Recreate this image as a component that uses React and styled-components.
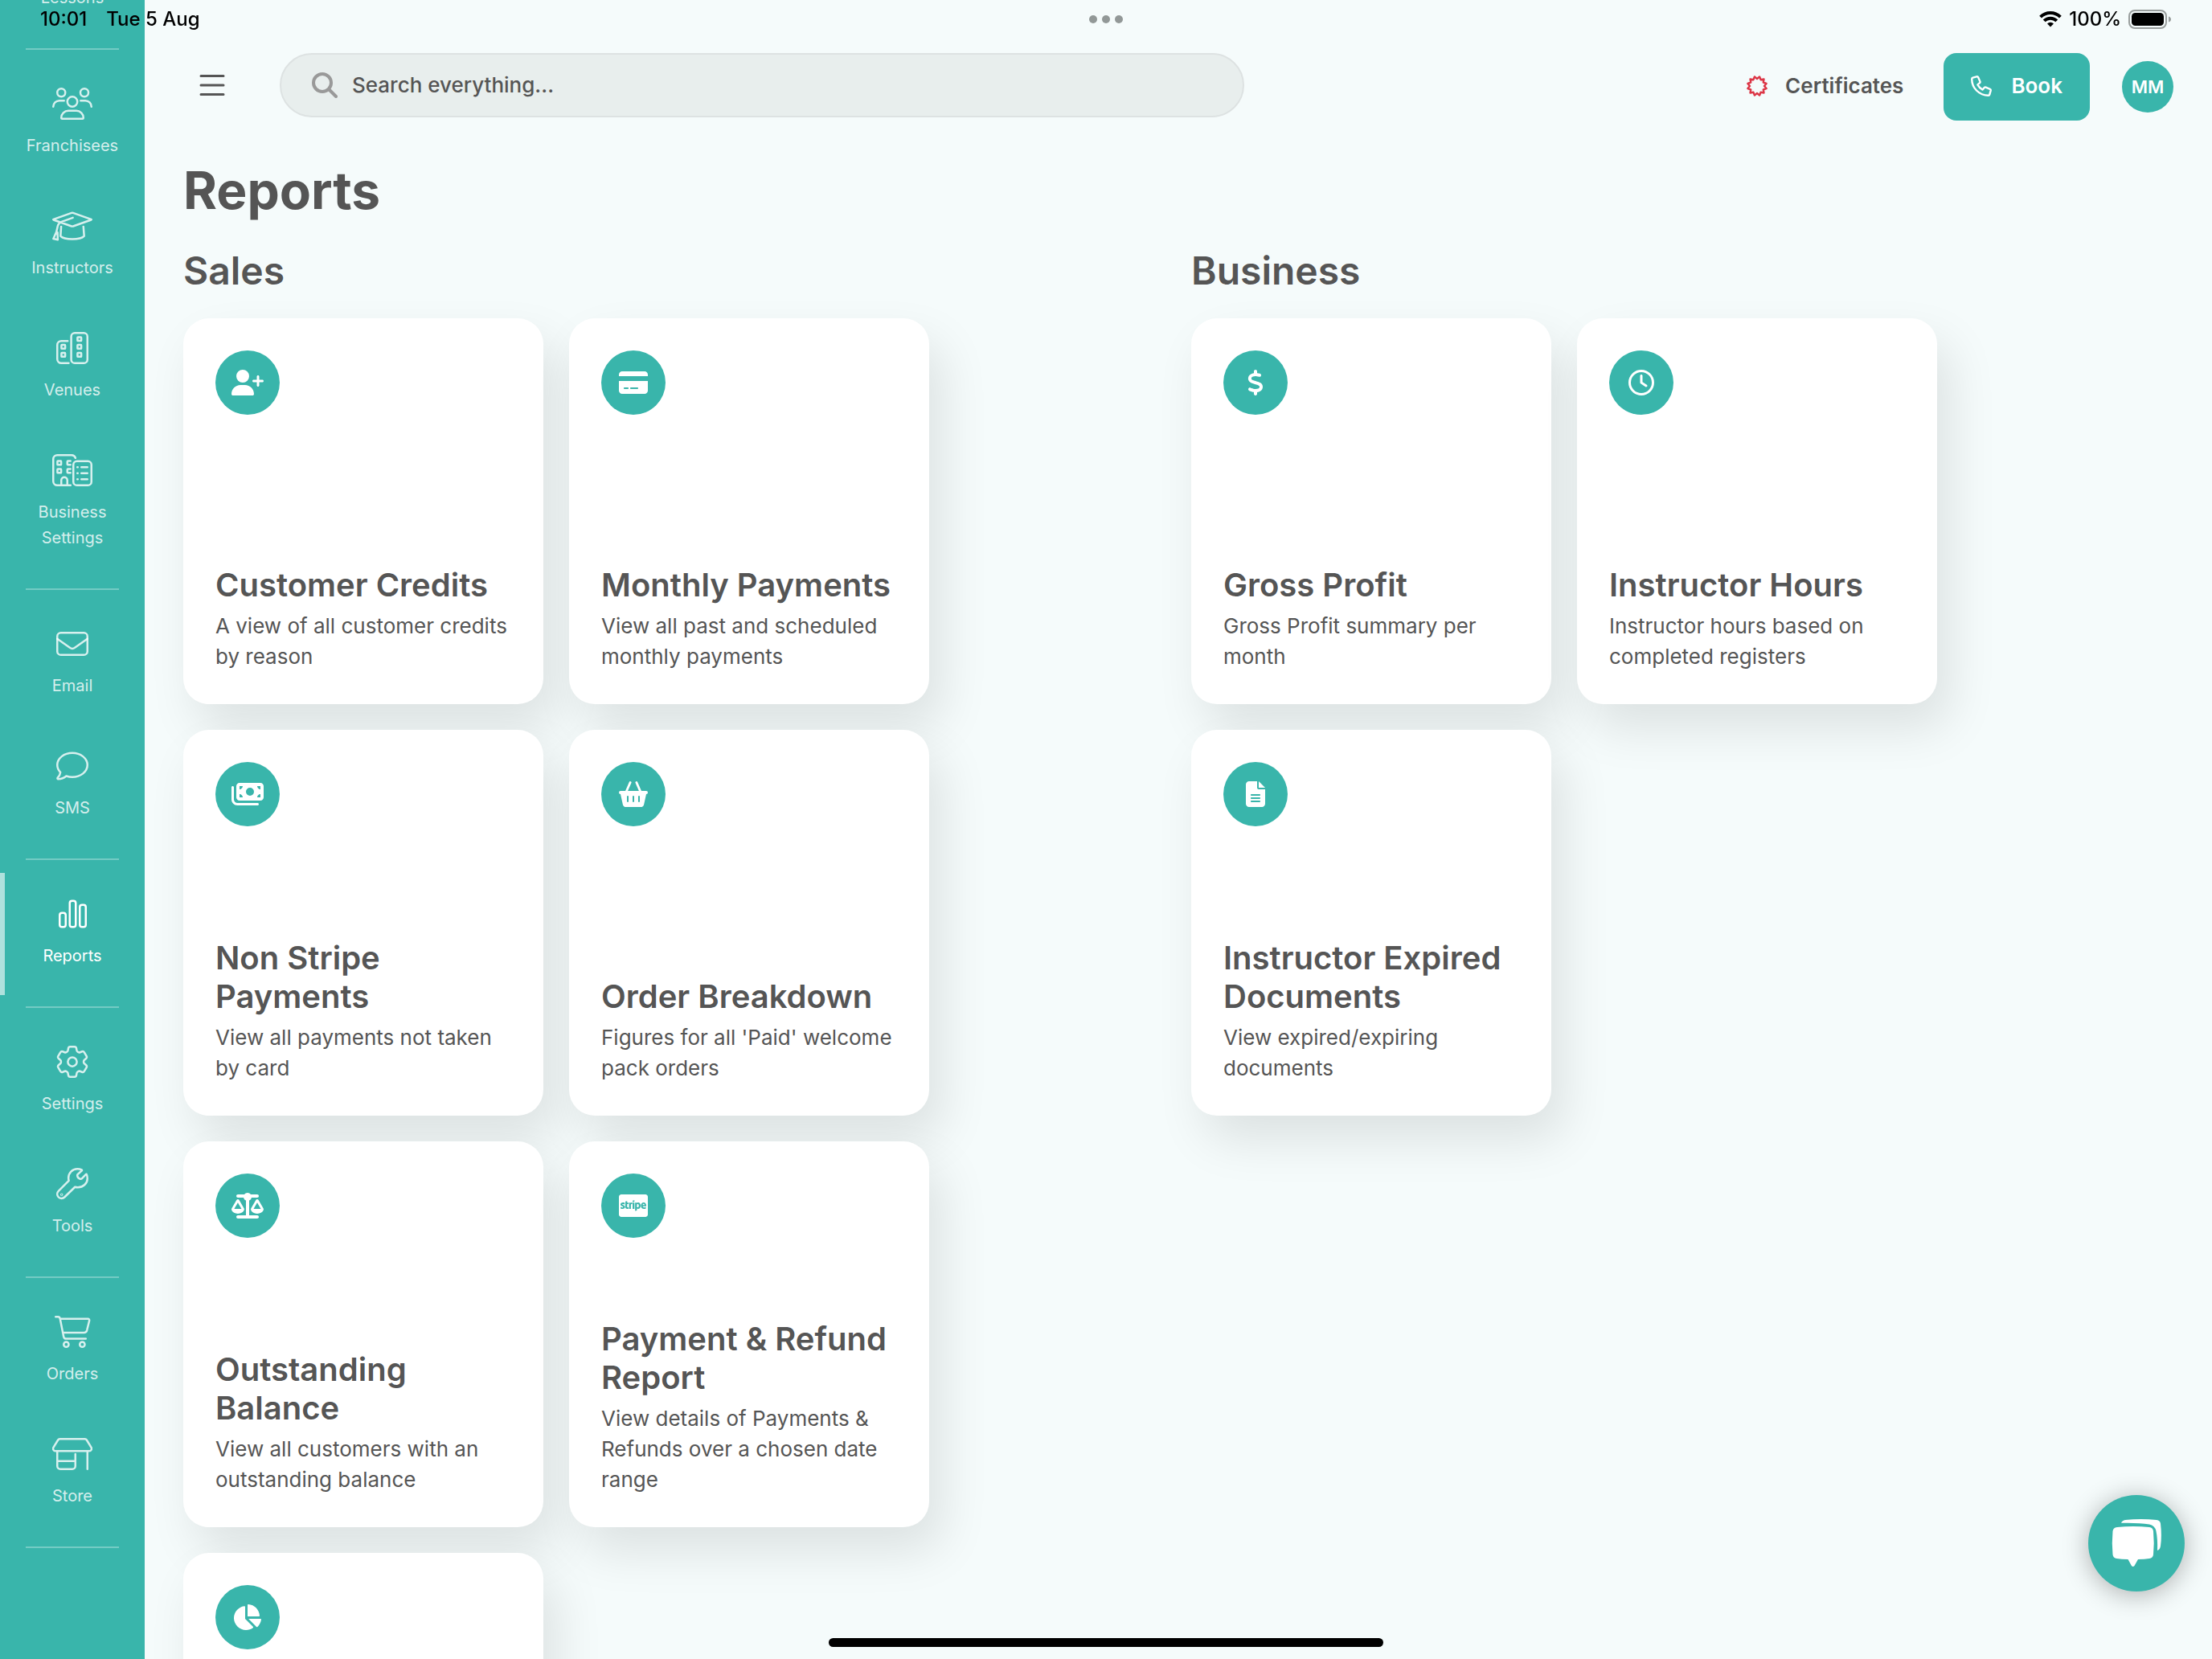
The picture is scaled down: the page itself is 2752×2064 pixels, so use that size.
import React from "react";
import styled, { createGlobalStyle, css } from "styled-components";
import {
  FaUserPlus,
  FaCreditCard,
  FaMoneyBills,
  FaScaleBalanced,
  FaCcStripe,
  FaDollarSign,
  FaRegClock,
  FaFileLines,
} from "react-icons/fa6";
import { FaChartPie } from "react-icons/fa";

const teal = "#39b5ab";
const ink = "#555555";

const GlobalStyle = createGlobalStyle`
  *, *::before, *::after { box-sizing: border-box; }
  body {
    margin: 0;
    background: #f5fbfb;
    color: ${ink};
    font-family: Inter, "Liberation Sans", sans-serif;
    font-size: 26px;
    line-height: 38px;
  }
  h1, h2, h3, p, ul { margin: 0; padding: 0; }
  button, input { font: inherit; color: inherit; }
`;

const Shell = styled.div`
  display: flex;
  height: 100vh;
  overflow: hidden;
`;

/* ---------- status bar ---------- */

const StatusBar = styled.div`
  position: fixed;
  z-index: 5;
  inset: 0 0 auto 0;
  height: 48px;
  padding: 0 50px;
  display: grid;
  grid-template-columns: 1fr auto 1fr;
  align-items: center;
  color: #000;
  font-size: 24px;
  font-weight: 500;
  line-height: 28px;
  pointer-events: none;
`;

const StatusGroup = styled.div`
  display: flex;
  align-items: center;
  gap: ${(p) => p.$gap}px;
  justify-content: ${(p) => (p.$end ? "flex-end" : "flex-start")};
`;

const Dots = styled.div`
  display: flex;
  gap: 6px;
`;

const Dot = styled.span`
  width: 10px;
  height: 10px;
  border-radius: 50%;
  background: #929897;
`;

const HomeIndicator = styled.div`
  position: fixed;
  z-index: 5;
  bottom: 15px;
  left: 50%;
  width: 690px;
  height: 11px;
  margin-left: -345px;
  border-radius: 6px;
  background: #000;
`;

/* ---------- sidebar ---------- */

const Sidebar = styled.nav`
  flex: none;
  width: 180px;
  overflow: hidden;
  background: ${teal};
`;

const NavList = styled.ul`
  list-style: none;
  margin-top: -106px;
`;

const NavDivider = styled.li`
  height: 2px;
  margin: 14px 32px 16px;
  background: rgba(255, 255, 255, 0.3);
`;

const NavLink = styled.a`
  display: flex;
  flex-direction: column;
  align-items: center;
  gap: 16px;
  padding: 31px 16px 33px;
  color: rgba(255, 255, 255, 0.8);
  font-size: 20px;
  line-height: 32px;
  text-align: center;
  text-decoration: none;
  ${(p) =>
    p.$active &&
    css`
      color: #fff;
      box-shadow: inset 6px 0 0 rgba(255, 255, 255, 0.6);
    `}
`;

const LineIcon = styled.svg`
  display: block;
  height: 40px;
  fill: none;
  stroke: currentColor;
  stroke-width: ${(p) => p.$stroke || 32};
  stroke-linecap: round;
  stroke-linejoin: round;
`;

const icons = {
  lessons: (
    <LineIcon viewBox="0 0 512 512">
      <rect x="48" y="16" width="416" height="480" rx="48" />
      <path d="M144 144h224M144 240h224" />
    </LineIcon>
  ),
  franchisees: (
    <LineIcon viewBox="0 0 640 512">
      <circle cx="144" cy="80" r="64" />
      <circle cx="512" cy="80" r="64" />
      <circle cx="320" cy="224" r="80" />
      <path d="M160 496h320c9 0 16-7 16-16 0-62-50-112-112-112H256c-62 0-112 50-112 112 0 9 7 16 16 16zM16 304c0-53 43-96 96-96h76M624 304c0-53-43-96-96-96h-76" />
    </LineIcon>
  ),
  instructors: (
    <LineIcon viewBox="0 0 640 512">
      <path d="M20 152 308 50q12-4 24 0l288 102q8 4 0 8L332 262q-12 4-24 0L20 160q-8-4 0-8zM328 126 150 190c-36 14-54 34-62 66l-22 96M66 352 18 462l70 14-4-116zM142 268l-10 150c30 34 104 50 188 50s158-16 188-50l-12-150" />
    </LineIcon>
  ),
  venues: (
    <LineIcon viewBox="0 0 512 512">
      <rect x="238" y="16" width="258" height="480" rx="56" />
      <path d="M182 144H80c-35 0-64 29-64 64v224c0 35 29 64 64 64h118" />
      <rect x="82" y="206" width="60" height="60" rx="8" />
      <rect x="82" y="334" width="60" height="60" rx="8" />
      <rect x="338" y="82" width="60" height="60" rx="8" />
      <rect x="338" y="206" width="60" height="60" rx="8" />
      <rect x="338" y="334" width="60" height="60" rx="8" />
    </LineIcon>
  ),
  business: (
    <LineIcon viewBox="0 0 640 512">
      <path d="M292 496H80c-35 0-64-29-64-64V80c0-35 29-64 64-64h228c30 0 54 18 62 46M144 496v-80a48 48 0 0 1 96 0v80M290 110h-40q-10 0-10 10v40q0 10 10 10h40M290 238h-40q-10 0-10 10v40q0 10 10 10h40" />
      <rect x="82" y="110" width="60" height="60" rx="8" />
      <rect x="82" y="238" width="60" height="60" rx="8" />
      <rect x="336" y="112" width="288" height="384" rx="56" />
      <path d="M400 208h6M400 304h6M400 400h6M464 208h96M464 304h96M464 400h96" />
    </LineIcon>
  ),
  email: (
    <LineIcon viewBox="0 0 512 512">
      <rect x="16" y="80" width="480" height="352" rx="56" />
      <path d="m16 176 200 142c24 17 56 17 80 0l200-142" />
    </LineIcon>
  ),
  sms: (
    <LineIcon viewBox="0 0 512 512">
      <path d="M160 416c30 10 62 16 96 16 132 0 240-86 240-192S388 48 256 48 16 134 16 240c0 44 19 85 50 118-3 31-20 61-44 86-7 8-2 20 9 20 44 0 92-16 129-48z" />
    </LineIcon>
  ),
  reports: (
    <LineIcon viewBox="0 0 448 512">
      <rect x="16" y="240" width="96" height="224" rx="36" />
      <rect x="176" y="48" width="96" height="416" rx="36" />
      <rect x="336" y="112" width="96" height="352" rx="36" />
    </LineIcon>
  ),
  settings: (
    <LineIcon viewBox="2.4 2.4 19.2 19.2" $stroke={1.2}>
      <path d="M9.594 3.94c.09-.542.56-.94 1.11-.94h2.593c.55 0 1.02.398 1.11.94l.213 1.281c.063.374.313.686.645.87.074.04.147.083.22.127.325.196.72.257 1.075.124l1.217-.456a1.125 1.125 0 0 1 1.37.49l1.296 2.247a1.125 1.125 0 0 1-.26 1.431l-1.003.827c-.293.241-.438.613-.43.992a7.723 7.723 0 0 1 0 .255c-.008.378.137.75.43.991l1.004.827c.424.35.534.955.26 1.43l-1.298 2.247a1.125 1.125 0 0 1-1.369.491l-1.217-.456c-.355-.133-.75-.072-1.076.124a6.47 6.47 0 0 1-.22.128c-.331.183-.581.495-.644.869l-.213 1.281c-.09.543-.56.94-1.11.94h-2.594c-.55 0-1.019-.398-1.11-.94l-.213-1.281c-.062-.374-.312-.686-.644-.87a6.52 6.52 0 0 1-.22-.127c-.325-.196-.72-.257-1.076-.124l-1.217.456a1.125 1.125 0 0 1-1.369-.49l-1.297-2.247a1.125 1.125 0 0 1 .26-1.431l1.004-.827c.292-.24.437-.613.43-.991a6.932 6.932 0 0 1 0-.255c.007-.38-.138-.751-.43-.992l-1.004-.827a1.125 1.125 0 0 1-.26-1.43l1.297-2.247a1.125 1.125 0 0 1 1.37-.491l1.216.456c.356.133.751.072 1.076-.124.072-.044.146-.086.22-.128.332-.183.582-.495.644-.869l.214-1.28Z" />
      <circle cx="12" cy="12" r="2.7" />
    </LineIcon>
  ),
  tools: (
    <LineIcon viewBox="0 0 512 512">
      <path d="M406 32c-22-10-46-16-70-16-80 0-142 66-142 144 0 15 2 30 6 44L38 366c-29 29-29 70-4 98s72 28 100 0l164-160c14 4 30 6 46 6 84 0 152-62 152-142 0-22-4-44-12-64-2-6-6-6-10-2l-64 66c-8 8-18 10-28 8-24-6-42-24-46-48-2-10 0-22 8-28l64-58c4-4 2-6-2-8z" />
      <circle cx="86" cy="424" r="6" />
    </LineIcon>
  ),
  orders: (
    <LineIcon viewBox="0 0 576 512">
      <path d="M16 16h37c16 0 29 11 32 26l58 290c4 20 20 34 40 34h313M84 48h446c16 0 26 15 22 30l-38 153c-6 22-25 37-48 37H128" />
      <circle cx="184" cy="456" r="40" />
      <circle cx="440" cy="456" r="40" />
    </LineIcon>
  ),
  store: (
    <LineIcon viewBox="0 0 640 512">
      <path d="M120 16h400c12 0 22 6 28 16l72 118c16 26 0 58-32 58H52c-32 0-48-32-32-58L92 32c6-10 16-16 28-16zM80 208v240c0 26 22 48 48 48h192c26 0 48-22 48-48V256M80 368h288M560 208v288" />
    </LineIcon>
  ),
};

const navGroups = [
  [{ label: "Lessons", icon: "lessons" }],
  [
    { label: "Franchisees", icon: "franchisees" },
    { label: "Instructors", icon: "instructors" },
    { label: "Venues", icon: "venues" },
    { label: "Business Settings", icon: "business" },
  ],
  [
    { label: "Email", icon: "email" },
    { label: "SMS", icon: "sms" },
  ],
  [{ label: "Reports", icon: "reports", active: true }],
  [
    { label: "Settings", icon: "settings" },
    { label: "Tools", icon: "tools" },
  ],
  [
    { label: "Orders", icon: "orders" },
    { label: "Store", icon: "store" },
  ],
];

/* ---------- header ---------- */

const Main = styled.main`
  flex: 1;
  min-width: 0;
  padding: 66px 48px 0;
  overflow: hidden;
`;

const Header = styled.header`
  display: flex;
  align-items: flex-start;
  gap: 48px;
  margin-bottom: 48px;
`;

const MenuButton = styled.button`
  flex: none;
  display: grid;
  place-items: center;
  width: 72px;
  height: 80px;
  padding: 0;
  border: 0;
  background: none;
`;

const SearchBox = styled.label`
  flex: 0 1 1200px;
  display: flex;
  align-items: center;
  gap: 18px;
  height: 80px;
  padding: 0 38px;
  border: 2px solid #dde2e2;
  border-radius: 40px;
  background: #e8eeed;
`;

const SearchInput = styled.input`
  flex: 1;
  min-width: 0;
  padding: 0;
  border: 0;
  outline: 0;
  background: none;
  font-size: 26px;
  font-weight: 500;
  line-height: 38px;
  &::placeholder {
    color: ${ink};
    opacity: 1;
  }
`;

const HeaderActions = styled.div`
  display: flex;
  align-items: center;
  gap: 40px;
  height: 84px;
  margin-left: auto;
  font-weight: 600;
`;

const CertificatesLink = styled.a`
  display: flex;
  align-items: center;
  gap: 22px;
  padding: 0 10px 2px 0;
  color: ${ink};
  font-size: 26px;
  text-decoration: none;
`;

const BookButton = styled.button`
  display: flex;
  align-items: center;
  gap: 24px;
  height: 84px;
  padding: 0 34px 2px;
  border: 0;
  border-radius: 16px;
  background: ${teal};
  color: #fff;
  font-size: 26px;
`;

const Avatar = styled.button`
  width: 64px;
  height: 64px;
  padding: 0;
  border: 0;
  border-radius: 50%;
  background: ${teal};
  color: #fff;
  font-size: 22px;
`;

const starPoints = Array.from({ length: 24 }, (_, i) => {
  const angle = (Math.PI / 12) * i - Math.PI / 2;
  const radius = i % 2 ? 12 : 9;
  return `${13 + radius * Math.cos(angle)},${13 + radius * Math.sin(angle)}`;
}).join(" ");

/* ---------- report cards ---------- */

const PageTitle = styled.h1`
  font-size: 64px;
  font-weight: 700;
  line-height: 78px;
`;

const Sections = styled.div`
  display: grid;
  grid-template-columns: 1fr 1fr;
  gap: 32px;
  padding-top: 32px;
`;

const SectionTitle = styled.h2`
  margin-bottom: 30px;
  font-size: 48px;
  font-weight: 600;
  line-height: 58px;
`;

const CardGrid = styled.div`
  display: flex;
  flex-wrap: wrap;
  gap: 32px;
  max-width: 960px;
`;

const Card = styled.a`
  display: flex;
  flex-direction: column;
  width: 448px;
  height: 480px;
  padding: 40px;
  border-radius: 32px;
  background: #fff;
  box-shadow: 16px 30px 60px rgba(0, 0, 0, 0.1);
  color: inherit;
  text-decoration: none;
`;

const Badge = styled.span`
  display: grid;
  place-items: center;
  width: 80px;
  height: 80px;
  margin-bottom: auto;
  border-radius: 50%;
  background: ${teal};
  color: #fff;
  svg {
    display: block;
    width: ${(p) => p.$iconWidth}px;
    height: 32px;
  }
`;

const CardTitle = styled.h3`
  margin-bottom: 8px;
  font-size: 40px;
  font-weight: 600;
  line-height: 48px;
`;

const CardText = styled.p`
  font-size: 26px;
  line-height: 38px;
`;

const BasketIcon = () => (
  <svg viewBox="0 0 576 512" fill="currentColor">
    <path
      d="M226 24 146 208M350 24l80 184"
      fill="none"
      stroke="currentColor"
      strokeWidth="46"
      strokeLinecap="round"
    />
    <path
      fillRule="evenodd"
      d="M32 192h512a32 32 0 0 1 0 64l-46 206c-6 30-32 50-62 50H140c-30 0-56-20-62-50L32 256a32 32 0 0 1 0-64zM192 304a16 16 0 0 0-32 0v96a16 16 0 0 0 32 0zM304 304a16 16 0 0 0-32 0v96a16 16 0 0 0 32 0zM416 304a16 16 0 0 0-32 0v96a16 16 0 0 0 32 0z"
    />
  </svg>
);

const sections = [
  {
    title: "Sales",
    cards: [
      { icon: FaUserPlus, width: 40, title: "Customer Credits", text: "A view of all customer credits by reason" },
      { icon: FaCreditCard, width: 36, title: "Monthly Payments", text: "View all past and scheduled monthly payments" },
      { icon: FaMoneyBills, width: 40, title: "Non Stripe Payments", text: "View all payments not taken by card" },
      { icon: BasketIcon, width: 36, title: "Order Breakdown", text: "Figures for all 'Paid' welcome pack orders" },
      { icon: FaScaleBalanced, width: 40, title: "Outstanding Balance", text: "View all customers with an outstanding balance" },
      { icon: FaCcStripe, width: 36, title: "Payment & Refund Report", text: "View details of Payments & Refunds over a chosen date range" },
      { icon: FaChartPie, width: 34, title: "", text: "" },
    ],
  },
  {
    title: "Business",
    cards: [
      { icon: FaDollarSign, width: 20, title: "Gross Profit", text: "Gross Profit summary per month" },
      { icon: FaRegClock, width: 32, title: "Instructor Hours", text: "Instructor hours based on completed registers" },
      { icon: FaFileLines, width: 24, title: "Instructor Expired Documents", text: "View expired/expiring documents" },
    ],
  },
];

/* ---------- chat ---------- */

const ChatButton = styled.button`
  position: fixed;
  right: 34px;
  bottom: 84px;
  width: 120px;
  height: 120px;
  padding: 0;
  border: 0;
  border-radius: 50%;
  background: ${teal};
  box-shadow: 0 4px 32px rgba(0, 0, 0, 0.3);
  svg {
    display: block;
  }
`;

export default function App() {
  return (
    <>
      <GlobalStyle />
      <StatusBar>
        <StatusGroup $gap={24}>
          <span>10:01</span>
          <span>Tue 5 Aug</span>
        </StatusGroup>
        <Dots>
          <Dot />
          <Dot />
          <Dot />
        </Dots>
        <StatusGroup $gap={9} $end>
          <svg width="28" height="20" viewBox="0 0 28 20" fill="none" stroke="#000" strokeWidth="4">
            <path d="M1.6 7.2a17.6 17.6 0 0 1 24.8 0M6.2 11.9a11 11 0 0 1 15.6 0" />
            <path d="M14 19.6l-4-4.2a5.6 5.6 0 0 1 8 0z" fill="#000" stroke="none" />
          </svg>
          <span>100%</span>
          <svg width="54" height="24" viewBox="0 0 54 24">
            <rect x="1" y="1" width="46" height="22" rx="7" fill="none" stroke="#999e9d" strokeWidth="2" />
            <rect x="4" y="4" width="40" height="16" rx="4.5" />
            <path d="M50 8.500q3 1 3 3.500t-3 3.500z" fill="#999e9d" />
          </svg>
        </StatusGroup>
      </StatusBar>

      <Shell>
        <Sidebar aria-label="Main">
          <NavList>
            {navGroups.map((group, g) => (
              <React.Fragment key={g}>
                {group.map((item) => (
                  <li key={item.label}>
                    <NavLink
                      href="#"
                      $active={item.active}
                      aria-current={item.active ? "page" : undefined}
                    >
                      {icons[item.icon]}
                      {item.label}
                    </NavLink>
                  </li>
                ))}
                <NavDivider role="separator" />
              </React.Fragment>
            ))}
          </NavList>
        </Sidebar>

        <Main>
          <Header>
            <MenuButton aria-label="Toggle menu">
              <svg width="32" height="28" viewBox="0 0 32 28" stroke={ink} strokeWidth="3" strokeLinecap="round">
                <path d="M2 2.500h28M2 14h28M2 25.500h28" />
              </svg>
            </MenuButton>
            <SearchBox>
              <svg width="32" height="32" viewBox="0 0 32 32" fill="none" stroke="#999999" strokeWidth="4" strokeLinecap="round">
                <circle cx="13" cy="13" r="11" />
                <path d="m21.500 21.500 8.500 8.500" />
              </svg>
              <SearchInput type="search" aria-label="Search" placeholder="Search everything..." />
            </SearchBox>
            <HeaderActions>
              <CertificatesLink href="#">
                <svg width="26" height="26" viewBox="0 0 26 26" fill="none" stroke="#dc3545" strokeWidth="2.4" strokeLinejoin="round">
                  <polygon points={starPoints} />
                </svg>
                Certificates
              </CertificatesLink>
              <BookButton>
                <svg width="26" height="26" viewBox="0 0 26 26" fill="none" stroke="#fff" strokeWidth="2.400" strokeLinejoin="round">
                  <path d="M7.200 1.300 2.400 2.600Q1.200 3 1.200 4.200C1.200 15.600 10.400 24.800 21.800 24.800q1.200 0 1.500-1.200l1.400-5q.3-1.300-.9-1.800l-5.200-2.200q-1.100-.4-1.900.4l-2.100 2.600c-2.700-1.400-4.800-3.600-6.200-6.200L11 9.200q.8-.7.4-1.800L9.200 2.200Q8.600 1 7.200 1.300z" />
                </svg>
                Book
              </BookButton>
              <Avatar>MM</Avatar>
            </HeaderActions>
          </Header>

          <PageTitle>Reports</PageTitle>
          <Sections>
            {sections.map((section) => (
              <section key={section.title}>
                <SectionTitle>{section.title}</SectionTitle>
                <CardGrid>
                  {section.cards.map(({ icon: Icon, width, title, text }, i) => (
                    <Card href="#" key={i}>
                      <Badge $iconWidth={width}>
                        <Icon />
                      </Badge>
                      {title && <CardTitle>{title}</CardTitle>}
                      {text && <CardText>{text}</CardText>}
                    </Card>
                  ))}
                </CardGrid>
              </section>
            ))}
          </Sections>
        </Main>
      </Shell>

      <ChatButton aria-label="Open chat">
        <svg width="120" height="120" viewBox="0 0 120 120" fill="#fff">
          <path d="M36 40q20-2 40 0 4.500.5 5 5 1.400 15 0 29-.5 4.500-5 5-6 .8-14 1l-4.500 8q-1.800 2-3.600 0L49.500 80q-8-.2-14-1-4.500-.5-5-5-1.400-14 0-29 .5-4.500 5.500-5z" />
          <path d="M41 34.800Q42.500 31.500 46 31q20-2 39 0 4.500.5 5 4.500 1.800 15 0 28-.8 4.500-4 5.500.6-14-1.600-24.500-1.600-6.500-8.400-8Q62 34.200 41 34.800z" />
        </svg>
      </ChatButton>
      <HomeIndicator />
    </>
  );
}
